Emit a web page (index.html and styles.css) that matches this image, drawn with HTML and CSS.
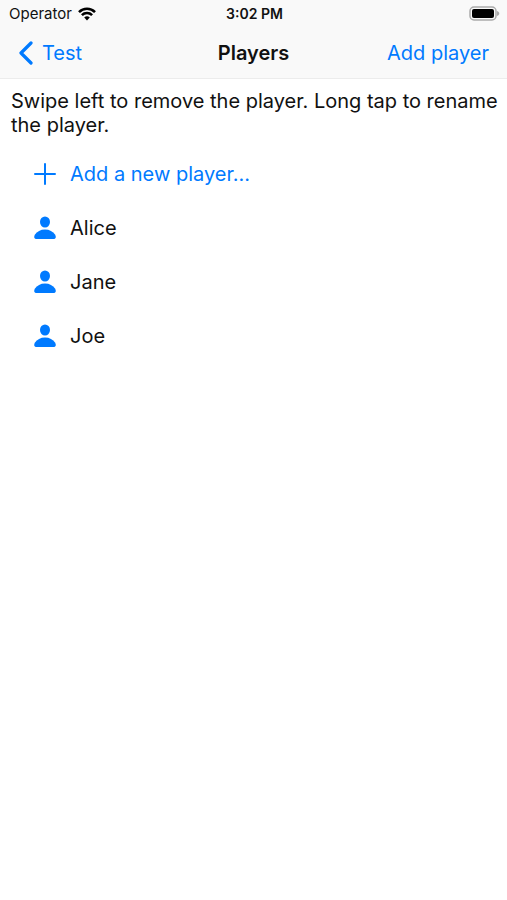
FILE: index.html
```html
<!DOCTYPE html>
<html lang="en">
<head>
  <meta charset="UTF-8">
  <meta name="viewport" content="width=device-width, initial-scale=1.0">
  <title>Players</title>
  <link rel="stylesheet" href="styles.css">
</head>
<body>
  <header class="top">
    <div class="status">
      <div class="carrier">
        <span>Operator</span>
        <svg class="wifi" viewBox="0 0 18 14" aria-hidden="true">
          <path d="M1 5.1a11.4 11.4 0 0 1 16 0" />
          <path d="M3.9 8.1a7.3 7.3 0 0 1 10.2 0" />
          <path class="dot" d="M9 13.5l-2.8-3a4 4 0 0 1 5.6 0z" />
        </svg>
      </div>
      <div class="clock">3:02 PM</div>
      <svg class="battery" viewBox="0 0 31 15" aria-hidden="true">
        <rect class="case" x="1" y="1" width="26" height="13" rx="4" />
        <rect class="charge" x="3" y="3" width="22" height="9" rx="2" />
        <path class="tip" d="M28 5c3 1 3 4 0 5z" />
      </svg>
    </div>
    <nav class="navbar">
      <a class="back" href="#">
        <svg class="chevron" viewBox="0 0 16 24" aria-hidden="true"><path d="M13 2L3 12l10 10" /></svg>
        <span>Test</span>
      </a>
      <h1>Players</h1>
      <button class="add" type="button">Add player</button>
    </nav>
  </header>

  <main>
    <p class="hint">Swipe left to remove the player. Long tap to rename the player.</p>

    <button class="row new" type="button">
      <svg class="icon plus" viewBox="0 0 22 24" aria-hidden="true"><path d="M11 2v20M1 12h20" /></svg>
      <span>Add a new player...</span>
    </button>
    <ul class="players">
      <li class="row">
        <svg class="icon" viewBox="0 0 22 24" aria-hidden="true"><ellipse cx="11" cy="6" rx="5" ry="5.5" /><path d="M3 23c-3 0-3.500-2-2-4.500C3 15.500 6.500 13.500 11 13.500s8 2 10 5c1.500 2.500 1 4.500-2 4.500z" /></svg>
        <span>Alice</span>
      </li>
      <li class="row">
        <svg class="icon" viewBox="0 0 22 24" aria-hidden="true"><ellipse cx="11" cy="6" rx="5" ry="5.5" /><path d="M3 23c-3 0-3.500-2-2-4.500C3 15.500 6.500 13.500 11 13.500s8 2 10 5c1.500 2.500 1 4.500-2 4.500z" /></svg>
        <span>Jane</span>
      </li>
      <li class="row">
        <svg class="icon" viewBox="0 0 22 24" aria-hidden="true"><ellipse cx="11" cy="6" rx="5" ry="5.5" /><path d="M3 23c-3 0-3.500-2-2-4.500C3 15.500 6.500 13.500 11 13.500s8 2 10 5c1.500 2.500 1 4.500-2 4.500z" /></svg>
        <span>Joe</span>
      </li>
    </ul>
  </main>
</body>
</html>
```
FILE: styles.css
```css
* { box-sizing: border-box; }
body { margin: 0; background: #fff; color: #111; font-family: Inter, "Liberation Sans", sans-serif; font-size: 20px; line-height: 24px; }
button { border: none; background: none; padding: 0; font: inherit; color: #007aff; cursor: pointer; }

.top { background: #f9f9f9; border-bottom: 1px solid #ececec; }
.status { display: grid; grid-template-columns: 1fr auto 1fr; align-items: center; height: 27px; padding: 0 7px 0 9px; font-size: 15px; }
.carrier { display: flex; align-items: center; gap: 6px; }
.clock { font-size: 14px; font-weight: 600; }
.wifi { width: 18px; height: 14px; fill: none; stroke: #000; stroke-width: 2.6; }
.wifi .dot { fill: #000; stroke: none; }
.battery { width: 31px; height: 15px; justify-self: end; }
.battery .case { fill: #f9f9f9; stroke: #aaa; stroke-width: 1.5; }
.battery .charge { fill: #000; }
.battery .tip { fill: #aaa; }

.navbar { display: grid; grid-template-columns: 1fr auto 1fr; align-items: center; height: 51px; padding: 0 18px; }
.back { display: flex; align-items: center; gap: 8px; color: #007aff; text-decoration: none; }
.chevron { width: 16px; height: 24px; fill: none; stroke: #007aff; stroke-width: 3.2; stroke-linecap: round; stroke-linejoin: round; }
h1 { margin: 0; font-size: 20px; font-weight: 600; }
.add { justify-self: end; }

.hint { margin: 0; padding: 10px 4px 10px 11px; }
.players { list-style: none; margin: 0; padding: 0; }
.row { display: flex; align-items: center; gap: 14px; width: 100%; height: 54px; padding: 0 34px; text-align: left; }
.icon { width: 22px; height: 24px; fill: #007aff; }
.plus { fill: none; stroke: #007aff; stroke-width: 2; stroke-linecap: round; }
```
